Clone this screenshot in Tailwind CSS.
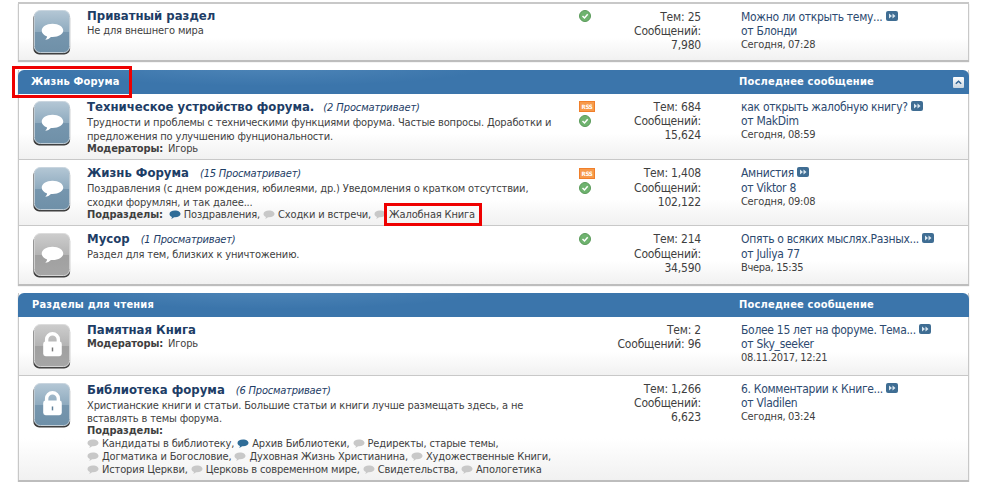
<!DOCTYPE html>
<html lang="ru">
<head>
  <meta charset="UTF-8" />
  <title>Форум</title>
  <script src="https://cdn.jsdelivr.net/npm/@tailwindcss/browser@4"></script>
</head>
<body class="bg-white h-[482px] overflow-hidden relative font-['DejaVu_Sans_Condensed','DejaVu_Sans',sans-serif] text-[11px] leading-[14px] text-[#3f3f3f] tracking-[-0.15px]">

  <!-- иконки -->
  <svg class="absolute w-0 h-0">
    <defs>
      <linearGradient id="blue" x1="0" y1="0" x2="0" y2="1">
        <stop offset="0" stop-color="#b4c7d5" /><stop offset="0.5" stop-color="#8fabbf" /><stop offset="0.52" stop-color="#7696ae" /><stop offset="1" stop-color="#6f90a8" />
      </linearGradient>
      <linearGradient id="grey" x1="0" y1="0" x2="0" y2="1">
        <stop offset="0" stop-color="#cdcdcd" /><stop offset="0.5" stop-color="#b4b4b4" /><stop offset="0.52" stop-color="#a0a0a0" /><stop offset="1" stop-color="#a6a6a6" />
      </linearGradient>
    </defs>
    <symbol id="bubble-blue" viewBox="0 0 38 46">
      <rect x="0" y="2" width="37.500" height="43.500" rx="6" fill="#3a3a3a" />
      <rect x="1" y="0.5" width="36" height="43" rx="6" fill="url(#blue)" stroke="#c9d5de" />
      <path d="M19.500 14c-6.400 0-11 3-11 7 0 2.800 2.200 5 5.500 6.100-.2 1.300-.9 2.400-1.900 3.400 2.300-.3 4.300-1.400 5.800-3 .5.100 1 .100 1.600.100 6.600 0 11-3 11-6.600 0-4-4.400-7-11-7z" fill="#fff" />
    </symbol>
    <symbol id="bubble-grey" viewBox="0 0 38 46">
      <rect x="0" y="2" width="37.500" height="43.500" rx="6" fill="#3f3f3f" />
      <rect x="1" y="0.5" width="36" height="43" rx="6" fill="url(#grey)" stroke="#dcdcdc" />
      <path d="M19.500 14c-6.400 0-11 3-11 7 0 2.800 2.200 5 5.500 6.100-.2 1.300-.9 2.400-1.900 3.400 2.300-.3 4.300-1.400 5.800-3 .5.100 1 .100 1.600.100 6.600 0 11-3 11-6.600 0-4-4.400-7-11-7z" fill="#fff" />
    </symbol>
    <symbol id="lock-blue" viewBox="0 0 38 46">
      <rect x="0" y="2" width="37.500" height="43.500" rx="6" fill="#3a3a3a" />
      <rect x="1" y="0.5" width="36" height="43" rx="6" fill="url(#blue)" stroke="#c9d5de" />
      <path d="M13.500 19v-3a6 6 0 0 1 12 0v3" fill="none" stroke="#fff" stroke-width="3.500" />
      <rect x="10" y="18" width="19" height="15" rx="2.500" fill="#fff" />
      <path d="M19.500 24v4" stroke="#5f7f98" stroke-width="1.500" />
    </symbol>
    <symbol id="lock-grey" viewBox="0 0 38 46">
      <rect x="0" y="2" width="37.500" height="43.500" rx="6" fill="#3f3f3f" />
      <rect x="1" y="0.5" width="36" height="43" rx="6" fill="url(#grey)" stroke="#dcdcdc" />
      <path d="M13.500 19v-3a6 6 0 0 1 12 0v3" fill="none" stroke="#fff" stroke-width="3.500" />
      <rect x="10" y="18" width="19" height="15" rx="2.500" fill="#fff" />
      <path d="M19.500 24v4" stroke="#777" stroke-width="1.500" />
    </symbol>
    <symbol id="ok" viewBox="0 0 12 12">
      <circle cx="6" cy="6" r="5.500" fill="#6fb36f" stroke="#5a9a5a" />
      <path d="M3.500 6l2 2 3.200-3.700" fill="none" stroke="#fff" stroke-width="1.500" />
    </symbol>
    <symbol id="go" viewBox="0 0 12 10">
      <rect width="12" height="10" rx="2" fill="#3f6d93" />
      <path d="M3 2.500l3 2.500-3 2.500zM6.500 2.500l3 2.500-3 2.500z" fill="#dbe7f0" />
    </symbol>
    <symbol id="sub-grey" viewBox="0 0 12 10">
      <path d="M6 .5C2.700.5.500 2 .500 4c0 1.300 1 2.400 2.500 3-.1.700-.5 1.300-1 1.800 1.200-.1 2.300-.7 3-1.500h1c3.300 0 5.500-1.400 5.500-3.300S9.300.5 6 .5z" fill="#c8c8c8" />
    </symbol>
    <symbol id="sub-blue" viewBox="0 0 12 10">
      <path d="M6 .5C2.700.5.500 2 .500 4c0 1.300 1 2.400 2.500 3-.1.700-.5 1.300-1 1.800 1.200-.1 2.300-.7 3-1.500h1c3.300 0 5.500-1.400 5.500-3.300S9.300.5 6 .5z" fill="#2f6c97" />
    </symbol>
  </svg>

  <div class="pl-[18px] w-[969px] pt-[2px]">

    <!-- Приватный раздел -->
    <div class="border border-t-2 border-[#c8c8c8] border-b-0 shadow-[0_2px_1px_#bdbdbd]">
      <div class="flex h-[56px] bg-gradient-to-b from-white from-60% to-[#f1f1f1]">
        <svg class="w-[38px] h-[45px] ml-[14px] mt-[6px]"><use href="#bubble-blue" /></svg>
        <div class="w-[491px] ml-[16px] pt-[4px] pr-[21px]">
          <h3 class="text-[13px] leading-[16px] font-bold text-[#1d3d66] tracking-normal">Приватный раздел</h3>
          <p>Не для внешнего мира</p>
        </div>
        <div class="w-[22px] pl-[1px] pt-[6px]">
          <svg class="w-[12px] h-[12px]"><use href="#ok" /></svg>
        </div>
        <div class="w-[101px] text-right text-[12px] leading-[14px] pt-[6px] tracking-[-0.2px]">
          <p>Тем: 25</p><p>Сообщений:</p><p>7,980</p>
        </div>
        <div class="ml-[40px] text-[12px] leading-[14px] pt-[6px] text-[#2d4a70] tracking-[-0.3px]">
          <p>Можно ли открыть тему... <svg class="inline w-[12px] h-[10px] align-baseline"><use href="#go" /></svg></p>
          <p>от Блонди</p>
          <p class="text-[11px] text-[#3f3f3f]">Сегодня, 07:28</p>
        </div>
      </div>
    </div>

    <!-- Жизнь Форума -->
    <div class="mt-[10px] border-x border-[#c8c8c8] shadow-[0_2px_1px_#bdbdbd]">
      <div class="-mx-px flex items-center h-[24px] rounded-t-[6px] bg-[#3b75ab] bg-[radial-gradient(ellipse_230px_22px_at_250px_-6px,#5087b9,transparent)] text-white font-bold text-[11px] tracking-[0.2px]">
        <span class="ml-[13px] w-[708px]">Жизнь Форума</span>
        <span>Последнее сообщение</span>
        <span class="ml-auto mr-[5px] flex items-center justify-center w-[11px] h-[11px] bg-gradient-to-b from-white to-[#c9d6e1] rounded-[1px]">
          <svg viewBox="0 0 10 10" class="w-[9px] h-[9px]"><path d="M2 6.500l3-3 3 3" fill="none" stroke="#2f6394" stroke-width="1.600" /></svg>
        </span>
      </div>

      <div class="flex h-[66px] border-b border-[#c8c8c8] bg-gradient-to-b from-white from-60% to-[#f1f1f1]">
        <svg class="w-[38px] h-[45px] ml-[14px] mt-[7px]"><use href="#bubble-blue" /></svg>
        <div class="w-[491px] ml-[16px] pt-[5px] pr-[21px]">
          <h3 class="text-[13px] leading-[16px] font-bold text-[#1d3d66] tracking-normal">Техническое устройство форума. <span class="ml-[5px] text-[11px] font-normal italic tracking-[-0.1px]">(2 Просматривает)</span></h3>
          <p>Трудности и проблемы с техническими функциями форума. Частые вопросы. Доработки и предложения по улучшению фунциональности.</p>
          <p class="-mt-[2px]"><b>Модераторы:</b> <span class="ml-[2px]">Игорь</span></p>
        </div>
        <div class="w-[22px] pl-[1px] pt-[7px]">
          <span class="block w-[16px] h-[11px] bg-[#f79a4b] border border-[#f07f2a] text-white text-[6px] leading-[9px] text-center font-bold">RSS</span>
          <svg class="w-[12px] h-[12px] mt-[3px]"><use href="#ok" /></svg>
        </div>
        <div class="w-[101px] text-right text-[12px] leading-[14px] pt-[6px] tracking-[-0.2px]">
          <p>Тем: 684</p><p>Сообщений:</p><p>15,624</p>
        </div>
        <div class="ml-[40px] text-[12px] leading-[14px] pt-[6px] text-[#2d4a70] tracking-[-0.3px]">
          <p>как открыть жалобную книгу? <svg class="inline w-[12px] h-[10px] align-baseline"><use href="#go" /></svg></p>
          <p>от MakDim</p>
          <p class="text-[11px] text-[#3f3f3f]">Сегодня, 08:59</p>
        </div>
      </div>

      <div class="flex h-[66px] border-b border-[#c8c8c8] bg-gradient-to-b from-white from-60% to-[#f1f1f1]">
        <svg class="w-[38px] h-[45px] ml-[14px] mt-[7px]"><use href="#bubble-blue" /></svg>
        <div class="w-[491px] ml-[16px] pt-[5px] pr-[21px]">
          <h3 class="text-[13px] leading-[16px] font-bold text-[#1d3d66] tracking-normal">Жизнь Форума <span class="ml-[7px] text-[11px] font-normal italic tracking-[-0.2px]">(15 Просматривает)</span></h3>
          <p>Поздравления (с днем рождения, юбилеями, др.) Уведомления о кратком отсутствии, сходки форумлян, и так далее...</p>
          <p class="-mt-[2px]"><b>Подразделы:</b> <svg class="inline w-[12px] h-[10px] ml-[3px]"><use href="#sub-blue" /></svg> Поздравления, <svg class="inline w-[12px] h-[10px]"><use href="#sub-grey" /></svg> Сходки и встречи, <svg class="inline w-[12px] h-[10px]"><use href="#sub-grey" /></svg> Жалобная Книга</p>
        </div>
        <div class="w-[22px] pl-[1px] pt-[8px]">
          <span class="block w-[16px] h-[11px] bg-[#f79a4b] border border-[#f07f2a] text-white text-[6px] leading-[9px] text-center font-bold">RSS</span>
          <svg class="w-[12px] h-[12px] mt-[3px]"><use href="#ok" /></svg>
        </div>
        <div class="w-[101px] text-right text-[12px] leading-[14.500px] pt-[6px] tracking-[-0.2px]">
          <p>Тем: 1,408</p><p>Сообщений:</p><p>102,122</p>
        </div>
        <div class="ml-[40px] text-[12px] leading-[14.500px] pt-[6px] text-[#2d4a70] tracking-[-0.3px]">
          <p>Амнистия <svg class="inline w-[12px] h-[10px] align-baseline"><use href="#go" /></svg></p>
          <p>от Viktor 8</p>
          <p class="text-[11px] text-[#3f3f3f]">Сегодня, 09:08</p>
        </div>
      </div>

      <div class="flex h-[58px] bg-gradient-to-b from-white from-60% to-[#f1f1f1]">
        <svg class="w-[38px] h-[45px] ml-[14px] mt-[7px]"><use href="#bubble-grey" /></svg>
        <div class="w-[491px] ml-[16px] pt-[5px] pr-[21px]">
          <h3 class="text-[13px] leading-[16px] font-bold text-[#1d3d66] tracking-normal">Мусор <span class="ml-[7px] text-[11px] font-normal italic tracking-[-0.2px]">(1 Просматривает)</span></h3>
          <p>Раздел для тем, близких к уничтожению.</p>
        </div>
        <div class="w-[22px] pl-[1px] pt-[7px]">
          <svg class="w-[12px] h-[12px]"><use href="#ok" /></svg>
        </div>
        <div class="w-[101px] text-right text-[12px] leading-[14.500px] pt-[6px] tracking-[-0.2px]">
          <p>Тем: 214</p><p>Сообщений:</p><p>34,590</p>
        </div>
        <div class="ml-[40px] text-[12px] leading-[14.500px] pt-[6px] text-[#2d4a70] tracking-[-0.3px]">
          <p>Опять о всяких мыслях.Разных... <svg class="inline w-[12px] h-[10px] align-baseline"><use href="#go" /></svg></p>
          <p>от Juliya 77</p>
          <p class="text-[11px] text-[#3f3f3f]">Вчера, 15:35</p>
        </div>
      </div>
    </div>

    <!-- Разделы для чтения -->
    <div class="mt-[9px] border-x border-[#c8c8c8] shadow-[0_2px_1px_#bdbdbd]">
      <div class="-mx-px flex items-center h-[24px] rounded-t-[6px] bg-[#3b75ab] bg-[radial-gradient(ellipse_230px_22px_at_250px_-6px,#5087b9,transparent)] text-white font-bold text-[11px] tracking-[0.2px]">
        <span class="ml-[14px] w-[707px]">Разделы для чтения</span>
        <span>Последнее сообщение</span>
      </div>

      <div class="flex h-[59px] border-b border-[#c8c8c8] bg-gradient-to-b from-white from-60% to-[#f1f1f1]">
        <svg class="w-[38px] h-[45px] ml-[14px] mt-[7px]"><use href="#lock-grey" /></svg>
        <div class="w-[491px] ml-[16px] pt-[5px] pr-[21px]">
          <h3 class="text-[13px] leading-[16px] font-bold text-[#1d3d66] tracking-normal">Памятная Книга</h3>
          <p class="-mt-[1px]"><b>Модераторы:</b> <span class="ml-[2px]">Игорь</span></p>
        </div>
        <div class="w-[22px]"></div>
        <div class="w-[101px] text-right text-[12px] leading-[14px] pt-[6px] tracking-[-0.2px]">
          <p>Тем: 2</p><p>Сообщений: 96</p>
        </div>
        <div class="ml-[40px] text-[12px] leading-[14px] pt-[6px] text-[#2d4a70] tracking-[-0.3px]">
          <p>Более 15 лет на форуме. Тема... <svg class="inline w-[12px] h-[10px] align-baseline"><use href="#go" /></svg></p>
          <p>от Sky_seeker</p>
          <p class="text-[11px] text-[#3f3f3f]">08.11.2017, 12:21</p>
        </div>
      </div>

      <div class="flex h-[104px] bg-gradient-to-b from-white from-60% to-[#f1f1f1]">
        <svg class="w-[38px] h-[45px] ml-[14px] mt-[7px]"><use href="#lock-blue" /></svg>
        <div class="w-[491px] ml-[16px] pt-[6px] pr-[21px] leading-[13px]">
          <h3 class="text-[13px] leading-[16px] font-bold text-[#1d3d66] tracking-normal">Библиотека форума <span class="ml-[7px] text-[11px] font-normal italic tracking-[-0.2px]">(6 Просматривает)</span></h3>
          <p>Христианские книги и статьи. Большие статьи и книги лучше размещать здесь, а не вставлять в темы форума.</p>
          <p class="-mt-[1px]"><b>Подразделы:</b></p>
          <p><svg class="inline w-[12px] h-[10px]"><use href="#sub-grey" /></svg> Кандидаты в библиотеку, <svg class="inline w-[12px] h-[10px]"><use href="#sub-blue" /></svg> Архив Библиотеки, <svg class="inline w-[12px] h-[10px]"><use href="#sub-grey" /></svg> Редиректы, старые темы,</p>
          <p><svg class="inline w-[12px] h-[10px]"><use href="#sub-grey" /></svg> Догматика и Богословие, <svg class="inline w-[12px] h-[10px]"><use href="#sub-grey" /></svg> Духовная Жизнь Христианина, <svg class="inline w-[12px] h-[10px]"><use href="#sub-grey" /></svg> Художественные Книги,</p>
          <p><svg class="inline w-[12px] h-[10px]"><use href="#sub-grey" /></svg> История Церкви, <svg class="inline w-[12px] h-[10px]"><use href="#sub-grey" /></svg> Церковь в современном мире, <svg class="inline w-[12px] h-[10px]"><use href="#sub-grey" /></svg> Свидетельства, <svg class="inline w-[12px] h-[10px]"><use href="#sub-grey" /></svg> Апологетика</p>
        </div>
        <div class="w-[22px]"></div>
        <div class="w-[101px] text-right text-[12px] leading-[14px] pt-[6px] tracking-[-0.2px]">
          <p>Тем: 1,266</p><p>Сообщений:</p><p>6,623</p>
        </div>
        <div class="ml-[40px] text-[12px] leading-[14px] pt-[6px] text-[#2d4a70] tracking-[-0.3px]">
          <p>6. Комментарии к Книге... <svg class="inline w-[12px] h-[10px] align-baseline"><use href="#go" /></svg></p>
          <p>от Vladilen</p>
          <p class="text-[11px] text-[#3f3f3f]">Сегодня, 03:24</p>
        </div>
      </div>
    </div>
  </div>

  <!-- красные рамки поверх скриншота -->
  <div class="absolute left-[12px] top-[66px] w-[120px] h-[32px] border-[3px] border-[#ee0000]"></div>
  <div class="absolute left-[384px] top-[203px] w-[98px] h-[23px] border-[3px] border-[#ee0000]"></div>
</body>
</html>
